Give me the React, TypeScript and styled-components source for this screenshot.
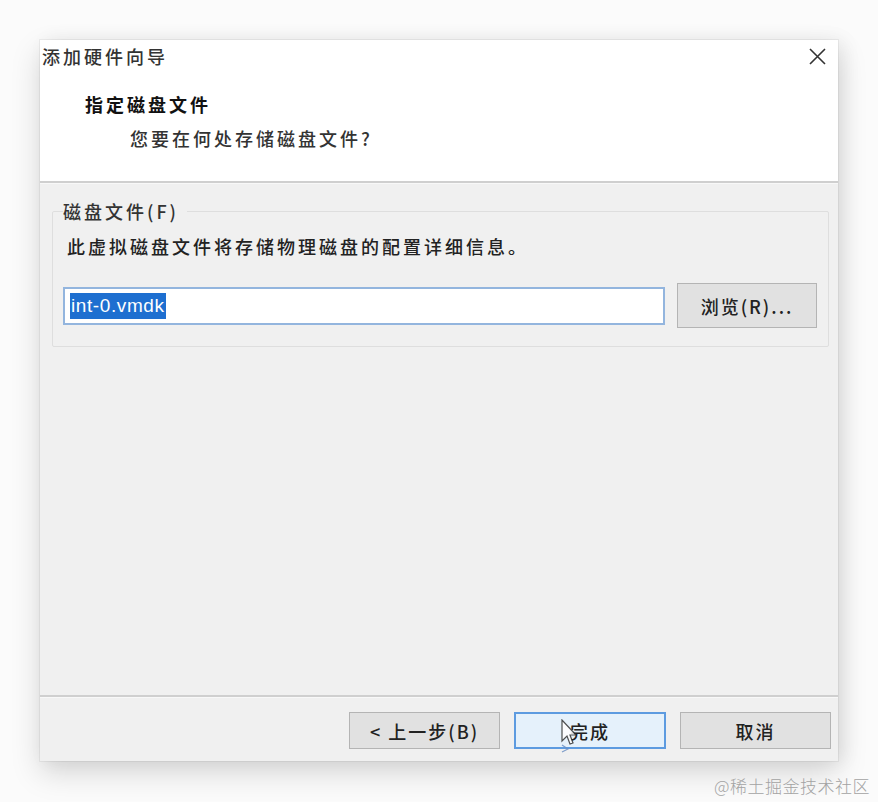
import React from "react";
import styled, { createGlobalStyle } from "styled-components";

const GlobalStyle = createGlobalStyle`
  html, body {
    margin: 0;
    padding: 0;
    background: #fbfbfb;
  }
  body {
    font-family: "Noto Sans CJK SC", "Liberation Sans", sans-serif;
    color: #222;
  }
  * { box-sizing: border-box; }
`;

const Page = styled.div`
  position: relative;
  width: 878px;
  height: 802px;
  padding: 40px 0 0 40px;
  display: flex;
  flex-direction: column;
  overflow: hidden;
`;

const Dialog = styled.div`
  width: 798px;
  height: 721px;
  display: flex;
  flex-direction: column;
  background: #f0f0f0;
  box-shadow: 0 0 0 1px rgba(0, 0, 0, 0.05), 0 12px 28px rgba(0, 0, 0, 0.15),
    6px 0 18px rgba(0, 0, 0, 0.06);
`;

const Header = styled.div`
  height: 141px;
  background: #ffffff;
  display: flex;
  flex-direction: column;
`;

const TitleBar = styled.div`
  height: 32px;
  display: flex;
  align-items: center;
  justify-content: space-between;
  padding: 0 11px 0 2px;
`;

const TitleText = styled.div`
  font-size: 18px;
  line-height: 24px;
  letter-spacing: 3px;
  font-weight: 500;
  color: #333;
`;

const CloseButton = styled.div`
  width: 19px;
  height: 19px;
  display: flex;
  align-items: center;
  justify-content: center;
`;

const Heading = styled.div`
  margin-top: 20px;
  padding-left: 45px;
  font-size: 18px;
  line-height: 24px;
  letter-spacing: 3px;
  font-weight: 700;
  color: #111;
`;

const SubHeading = styled.div`
  margin-top: 10px;
  padding-left: 90px;
  font-size: 18px;
  line-height: 24px;
  letter-spacing: 3px;
  font-weight: 500;
  color: #333;
`;

const Divider = styled.div`
  height: 3px;
  background: #cfcfcf;
  border-bottom: 1px solid #f8f8f8;
`;

const Body = styled.div`
  flex: 1;
  padding: 15px 9px 0 12px;
`;

const GroupBox = styled.fieldset`
  margin: 0;
  padding: 0 11px 18px 10px;
  border: 1px solid #dedede;
  border-radius: 2px;
  min-width: 0;
`;

const Legend = styled.legend`
  padding: 0 8px 0 0;
  font-size: 18px;
  line-height: 24px;
  letter-spacing: 3px;
  font-weight: 500;
  color: #333;
`;

const Description = styled.div`
  margin-top: 11px;
  padding-left: 4px;
  font-size: 18px;
  line-height: 24px;
  letter-spacing: 3px;
  font-weight: 500;
  color: #222;
`;

const InputRow = styled.div`
  margin-top: 25px;
  display: flex;
  align-items: center;
  gap: 12px;
`;

const TextField = styled.div`
  flex: 1;
  height: 38px;
  background: #ffffff;
  border: 2px solid #93b5de;
  display: flex;
  align-items: center;
  padding-left: 5px;
`;

const Selected = styled.span`
  background: #1e6fd0;
  color: #ffffff;
  font-family: "Liberation Sans", sans-serif;
  font-size: 19px;
  line-height: 26px;
  letter-spacing: 0.6px;
  padding: 0 1px;
`;

const WinButton = styled.div<{ $primary?: boolean; $width: number; $height: number }>`
  width: ${(p) => p.$width}px;
  height: ${(p) => p.$height}px;
  display: flex;
  align-items: center;
  justify-content: center;
  background: ${(p) => (p.$primary ? "#e5f1fb" : "#e1e1e1")};
  border: ${(p) => (p.$primary ? "2px solid #5d9be0" : "1px solid #b4b4b4")};
  font-size: 18px;
  line-height: 24px;
  letter-spacing: 2px;
  font-weight: 500;
  color: #222;
  flex-shrink: 0;
`;

const Footer = styled.div`
  height: 63px;
  display: flex;
  justify-content: flex-end;
  align-items: flex-start;
  padding: 14px 7px 0 0;
  gap: 14px;
`;

const Watermark = styled.div`
  margin-top: 13px;
  padding-right: 8px;
  width: 838px;
  text-align: right;
  font-size: 17px;
  line-height: 24px;
  letter-spacing: 0.5px;
  color: #a3a3a3;
  font-weight: 300;
`;

const Cursor = styled.svg`
  position: absolute;
  left: 560px;
  top: 719px;
  opacity: 0.85;
`;

export default function App() {
  return (
    <>
      <GlobalStyle />
      <Page>
        <Dialog>
          <Header>
            <TitleBar>
              <TitleText>添加硬件向导</TitleText>
              <CloseButton>
                <svg width="19" height="19" viewBox="0 0 19 19">
                  <path d="M2 2 L17 17 M17 2 L2 17" stroke="#333" strokeWidth="1.6" fill="none" />
                </svg>
              </CloseButton>
            </TitleBar>
            <Heading>指定磁盘文件</Heading>
            <SubHeading>您要在何处存储磁盘文件?</SubHeading>
          </Header>
          <Divider />
          <Body>
            <GroupBox>
              <Legend>磁盘文件(F)</Legend>
              <Description>此虚拟磁盘文件将存储物理磁盘的配置详细信息。</Description>
              <InputRow>
                <TextField>
                  <Selected>int-0.vmdk</Selected>
                </TextField>
                <WinButton $width={140} $height={45}>浏览(R)...</WinButton>
              </InputRow>
            </GroupBox>
          </Body>
          <Divider />
          <Footer>
            <WinButton $width={151} $height={37}>&lt; 上一步(B)</WinButton>
            <WinButton $width={152} $height={37} $primary>完成</WinButton>
            <WinButton $width={151} $height={37}>取消</WinButton>
          </Footer>
        </Dialog>
        <Watermark>@稀土掘金技术社区</Watermark>
        <Cursor width="16" height="34" viewBox="0 0 16 34">
          <path d="M2 1 L2 22 L7 17 L10 25 L13 24 L10 16 L16 16 Z" fill="#ffffff" stroke="#333" strokeWidth="1.2" />
          <path d="M2 26 L8 30 L2 33" fill="none" stroke="#6b8fc4" strokeWidth="1.2" />
        </Cursor>
      </Page>
    </>
  );
}
